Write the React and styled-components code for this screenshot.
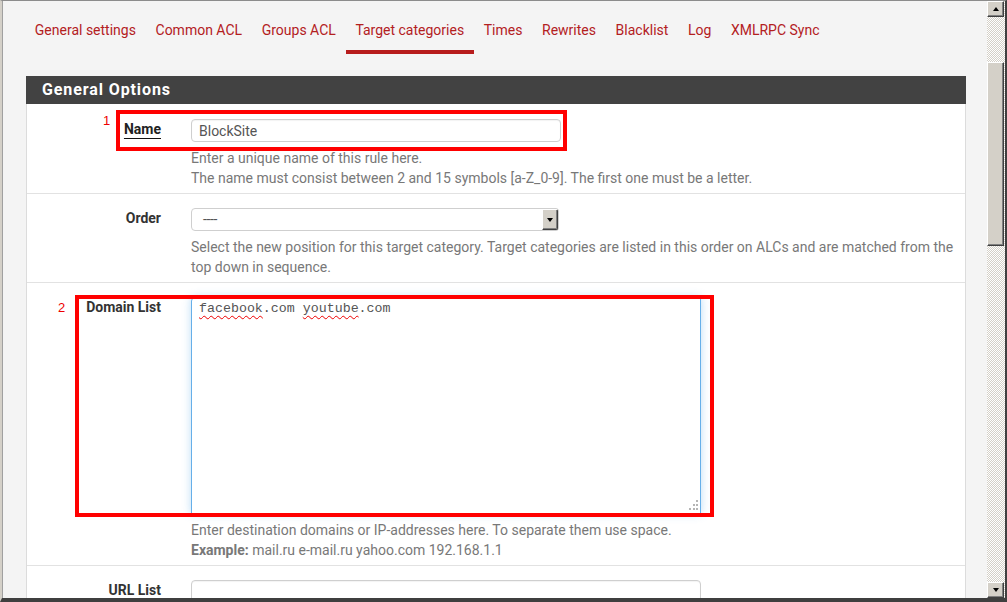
import React from 'react';
import styled, { createGlobalStyle } from 'styled-components';

const GlobalStyle = createGlobalStyle`
  html, body { margin: 0; padding: 0; width: 1007px; height: 602px; overflow: hidden; }
  body { font-family: Roboto, "Liberation Sans", sans-serif; background: #f4f4f4; }
  * { box-sizing: border-box; }
`;

const Frame = styled.div`
  width: 1007px;
  height: 602px;
  display: flex;
  border-top: 1px solid #8c8c8c;
  border-bottom: 4px solid #3f3f3f;
  border-left: 2px solid #d4d0c8;
  border-right: 2px solid #404040;
  background: #f4f4f4;
`;

const Viewport = styled.div`
  flex: 1;
  overflow: hidden;
  border-left: 1px solid #a0a0a0;
  background: #f4f4f4;
`;

const Page = styled.div`
  padding: 0 21px 0 23px;
`;

const Tabs = styled.nav`
  display: flex;
  padding-top: 9px;
  margin-left: -1px;
`;

const Tab = styled.a`
  display: block;
  padding: 10px 9.8px;
  font-size: 14px;
  line-height: 20px;
  color: #b3201e;
  text-decoration: none;
  border-bottom: 4px solid ${p => (p.$active ? '#b71c1c' : 'transparent')};
  white-space: nowrap;
`;

const Panel = styled.section`
  margin-top: 22px;
  background: #fff;
  border-left: 1px solid #dcdcdc;
  border-right: 1px solid #dcdcdc;
`;

const PanelHeader = styled.h2`
  margin: 0 -1px;
  height: 28px;
  background: #424242;
  color: #fff;
  font-size: 16px;
  font-weight: 700;
  letter-spacing: 0.9px;
  line-height: 28px;
  padding-left: 16px;
`;

const Row = styled.div`
  position: relative;
  display: grid;
  grid-template-columns: 149px 1fr;
  column-gap: 15px;
  padding: ${p => (p.$first ? '15px' : '14px')} 12px 5px 0;
  border-top: ${p => (p.$first ? 'none' : '1px solid #e2e2e2')};
`;

const Label = styled.label`
  text-align: right;
  padding-right: 15px;
  font-size: 14px;
  line-height: 20px;
  font-weight: 700;
  color: #333;
`;

const LabelText = styled.span`
  text-decoration: ${p => (p.$underline ? 'underline' : 'none')};
  text-decoration-color: #111;
  text-underline-offset: 4px;
  color: #222;
`;

const Field = styled.div`
  display: flex;
  flex-direction: column;
  align-items: flex-start;
`;

const TextInput = styled.input`
  width: ${p => p.$w}px;
  height: 23px;
  border: 1px solid #cfcfcf;
  border-radius: 4px;
  padding: 0 7px;
  font-family: Roboto, "Liberation Sans", sans-serif;
  font-size: 14px;
  color: #555;
  background: #fff;
  box-shadow: inset 0 1px 1px rgba(0, 0, 0, 0.05);
  outline: none;
`;

const Select = styled.div`
  width: 368px;
  height: 23px;
  display: flex;
  align-items: stretch;
  border: 1px solid #cfcfcf;
  border-radius: 4px 3px 3px 4px;
  background: #fff;
  overflow: hidden;
`;

const SelectValue = styled.span`
  flex: 1;
  padding-left: 11px;
  font-size: 14px;
  line-height: 21px;
  color: #555;
  letter-spacing: -0.4px;
`;

const ClassicButton = styled.span`
  display: flex;
  align-items: center;
  justify-content: center;
  background: #d4d0c8;
  border-style: solid;
  border-width: 1px;
  border-color: #fff #404040 #404040 #fff;
  box-shadow: inset -1px -1px 0 #808080;
`;

const SelectButton = styled(ClassicButton)`
  width: 16px;
`;

const Triangle = styled.span`
  width: 0;
  height: 0;
  border-left: 3.5px solid transparent;
  border-right: 3.5px solid transparent;
  ${p => (p.$up ? 'border-bottom: 4px solid #000;' : 'border-top: 4px solid #000;')}
`;

const TextArea = styled.div`
  position: relative;
  width: 510px;
  height: 217px;
  border: 1px solid #66afe9;
  border-radius: 4px 0 0 0;
  box-shadow: 0 0 8px rgba(102, 175, 233, 0.45);
  padding: 3px 7px;
  font-family: "Liberation Mono", "Courier New", monospace;
  font-size: 13.3px;
  line-height: 16px;
  color: #555;
  background: #fff;
`;

const Misspelled = styled.span`
  text-decoration: underline wavy #e00;
  text-decoration-skip-ink: none;
  text-underline-offset: 3px;
  text-decoration-thickness: 1px;
`;

const Grip = styled.svg`
  position: absolute;
  right: 1px;
  bottom: 1px;
`;

const Help = styled.div`
  margin-top: 6px;
  font-size: 14px;
  line-height: 20px;
  color: #787878;
  white-space: nowrap;
`;

const Bold = styled.strong`
  font-weight: 700;
`;

const Callout = styled.div`
  position: absolute;
  left: ${p => p.$x}px;
  top: ${p => p.$y}px;
  width: ${p => p.$w}px;
  height: ${p => p.$h}px;
  border: 4px solid #ff0000;
  pointer-events: none;
`;

const CalloutNumber = styled.span`
  position: absolute;
  left: ${p => p.$x}px;
  top: ${p => p.$y}px;
  font-family: "Liberation Sans", Arial, sans-serif;
  font-size: 13px;
  line-height: 13px;
  color: #ee0000;
`;

const Scrollbar = styled.div`
  width: 18px;
  display: flex;
  flex-direction: column;
  background: repeating-conic-gradient(#d4d0c8 0 25%, #ffffff 0 50%) 0 0 / 2px 2px;
`;

const ScrollButton = styled(ClassicButton)`
  width: 17px;
  height: 16px;
  flex: none;
`;

const Thumb = styled(ClassicButton)`
  width: 17px;
  height: 184px;
  margin-top: 45px;
  flex: none;
`;

const Spacer = styled.div`
  flex: 1;
`;

const tabs = [
  'General settings',
  'Common ACL',
  'Groups ACL',
  'Target categories',
  'Times',
  'Rewrites',
  'Blacklist',
  'Log',
  'XMLRPC Sync',
];

export default function App() {
  return (
    <>
      <GlobalStyle />
      <Frame>
        <Viewport>
          <Page>
            <Tabs>
              {tabs.map(t => (
                <Tab key={t} $active={t === 'Target categories'}>{t}</Tab>
              ))}
            </Tabs>
            <Panel>
              <PanelHeader>General Options</PanelHeader>

              <Row $first>
                <Label><LabelText $underline>Name</LabelText></Label>
                <Field>
                  <TextInput $w={370} readOnly value="BlockSite" />
                  <Help>
                    Enter a unique name of this rule here.<br />
                    The name must consist between 2 and 15 symbols [a-Z_0-9]. The first one must be a letter.
                  </Help>
                </Field>
                <CalloutNumber $x={76} $y={10}>1</CalloutNumber>
                <Callout $x={89} $y={6} $w={451} $h={41} />
              </Row>

              <Row>
                <Label>Order</Label>
                <Field>
                  <Select>
                    <SelectValue>----</SelectValue>
                    <SelectButton><Triangle /></SelectButton>
                  </Select>
                  <Help>
                    Select the new position for this target category. Target categories are listed in this order on ALCs and are matched from the<br />
                    top down in sequence.
                  </Help>
                </Field>
              </Row>

              <Row>
                <Label>Domain List</Label>
                <Field>
                  <TextArea>
                    <Misspelled>facebook</Misspelled>.com <Misspelled>youtube</Misspelled>.com
                    <Grip width="12" height="12" viewBox="0 0 12 12">
                      <g fill="#b5b5b5">
                        <rect x="9" y="0" width="2" height="2" />
                        <rect x="6" y="4" width="2" height="2" />
                        <rect x="9" y="4" width="2" height="2" />
                        <rect x="2" y="8" width="2" height="2" />
                        <rect x="6" y="8" width="2" height="2" />
                        <rect x="9" y="8" width="2" height="2" />
                      </g>
                    </Grip>
                  </TextArea>
                  <Help>
                    Enter destination domains or IP-addresses here. To separate them use space.<br />
                    <Bold>Example:</Bold> mail.ru e-mail.ru yahoo.com 192.168.1.1
                  </Help>
                </Field>
                <CalloutNumber $x={31} $y={18}>2</CalloutNumber>
                <Callout $x={48} $y={12} $w={639} $h={222} />
              </Row>

              <Row>
                <Label>URL List</Label>
                <Field>
                  <TextInput $w={510} readOnly value="" />
                </Field>
              </Row>
            </Panel>
          </Page>
        </Viewport>
        <Scrollbar>
          <ScrollButton><Triangle $up /></ScrollButton>
          <Thumb />
          <Spacer />
          <ScrollButton><Triangle /></ScrollButton>
        </Scrollbar>
      </Frame>
    </>
  );
}
